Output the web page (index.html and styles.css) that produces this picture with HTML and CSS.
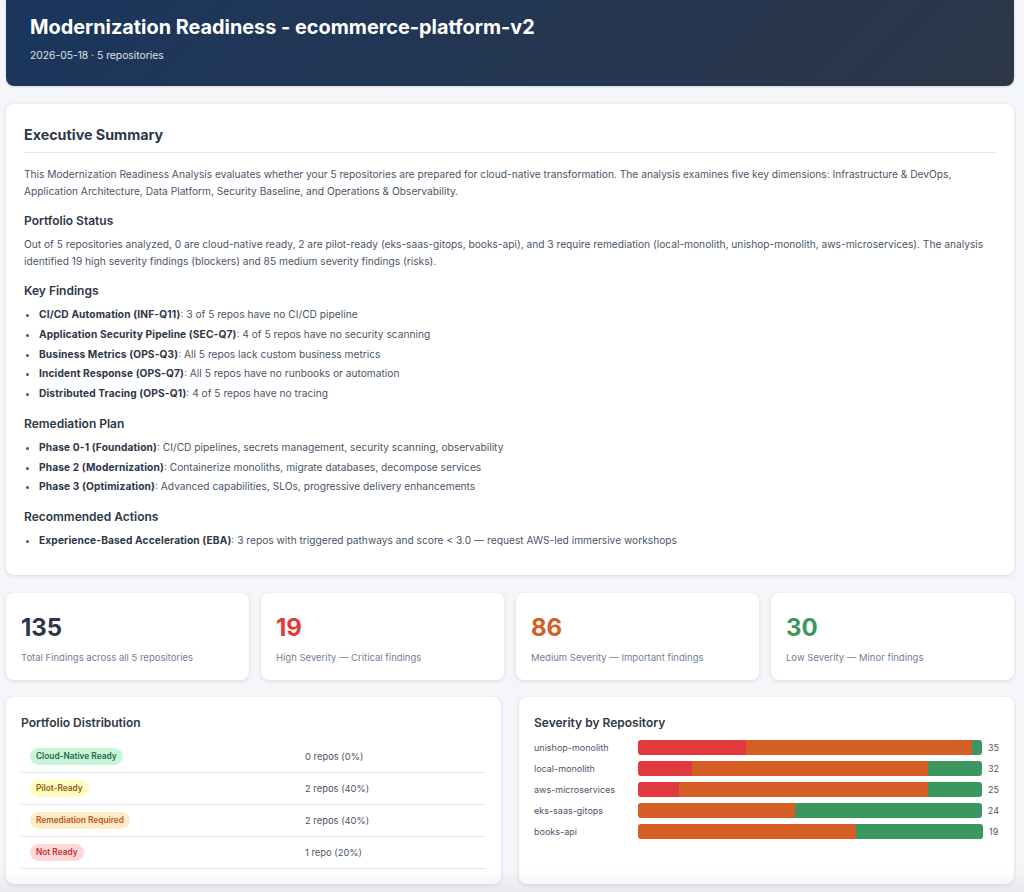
FILE: index.html
```html
<!DOCTYPE html>
<html lang="en">
<head>
<meta charset="utf-8">
<title>Modernization Readiness</title>
<link rel="stylesheet" href="styles.css">
</head>
<body>
<main class="page">
  <header class="hero">
    <h1>Modernization Readiness - ecommerce-platform-v2</h1>
    <p>2026-05-18 · 5 repositories</p>
  </header>
  <section class="card summary">
    <h2>Executive Summary</h2>
    <p>This Modernization Readiness Analysis evaluates whether your 5 repositories are prepared for cloud-native transformation. The analysis examines five key dimensions: Infrastructure &amp; DevOps, Application Architecture, Data Platform, Security Baseline, and Operations &amp; Observability.</p>
    <h3>Portfolio Status</h3>
    <p>Out of 5 repositories analyzed, 0 are cloud-native ready, 2 are pilot-ready (eks-saas-gitops, books-api), and 3 require remediation (local-monolith, unishop-monolith, aws-microservices). The analysis identified 19 high severity findings (blockers) and 85 medium severity findings (risks).</p>
    <h3>Key Findings</h3>
    <ul>
      <li><strong>CI/CD Automation (INF-Q11)</strong>: 3 of 5 repos have no CI/CD pipeline</li>
      <li><strong>Application Security Pipeline (SEC-Q7)</strong>: 4 of 5 repos have no security scanning</li>
      <li><strong>Business Metrics (OPS-Q3)</strong>: All 5 repos lack custom business metrics</li>
      <li><strong>Incident Response (OPS-Q7)</strong>: All 5 repos have no runbooks or automation</li>
      <li><strong>Distributed Tracing (OPS-Q1)</strong>: 4 of 5 repos have no tracing</li>
    </ul>
    <h3>Remediation Plan</h3>
    <ul>
      <li><strong>Phase 0-1 (Foundation)</strong>: CI/CD pipelines, secrets management, security scanning, observability</li>
      <li><strong>Phase 2 (Modernization)</strong>: Containerize monoliths, migrate databases, decompose services</li>
      <li><strong>Phase 3 (Optimization)</strong>: Advanced capabilities, SLOs, progressive delivery enhancements</li>
    </ul>
    <h3>Recommended Actions</h3>
    <ul>
      <li><strong>Experience-Based Acceleration (EBA)</strong>: 3 repos with triggered pathways and score &lt; 3.0 — request AWS-led immersive workshops</li>
    </ul>
  </section>
  <section class="kpis">
    <div class="card kpi"><div class="num navy">135</div><div class="lbl">Total Findings across all 5 repositories</div></div>
    <div class="card kpi"><div class="num red">19</div><div class="lbl">High Severity — Critical findings</div></div>
    <div class="card kpi"><div class="num orange">86</div><div class="lbl">Medium Severity — Important findings</div></div>
    <div class="card kpi"><div class="num green">30</div><div class="lbl">Low Severity — Minor findings</div></div>
  </section>
  <section class="split">
    <div class="card panel">
      <h4>Portfolio Distribution</h4>
      <table>
        <tr><td class="c1"><span class="pill p-green">Cloud-Native Ready</span></td><td>0 repos (0%)</td></tr>
        <tr><td class="c1"><span class="pill p-yellow">Pilot-Ready</span></td><td>2 repos (40%)</td></tr>
        <tr><td class="c1"><span class="pill p-orange">Remediation Required</span></td><td>2 repos (40%)</td></tr>
        <tr><td class="c1"><span class="pill p-red">Not Ready</span></td><td>1 repo (20%)</td></tr>
      </table>
    </div>
    <div class="card panel">
      <h4>Severity by Repository</h4>
      <div class="bars">
        <div class="row"><span class="name">unishop-monolith</span><div class="bar"><i class="r" style="width:31.4%"></i><i class="o" style="width:65.8%"></i><i class="g" style="width:2.8%"></i></div><span class="val">35</span></div>
        <div class="row"><span class="name">local-monolith</span><div class="bar"><i class="r" style="width:15.6%"></i><i class="o" style="width:68.8%"></i><i class="g" style="width:15.6%"></i></div><span class="val">32</span></div>
        <div class="row"><span class="name">aws-microservices</span><div class="bar"><i class="r" style="width:12%"></i><i class="o" style="width:72.2%"></i><i class="g" style="width:15.8%"></i></div><span class="val">25</span></div>
        <div class="row"><span class="name">eks-saas-gitops</span><div class="bar"><i class="o" style="width:45.8%"></i><i class="g" style="width:54.2%"></i></div><span class="val">24</span></div>
        <div class="row"><span class="name">books-api</span><div class="bar"><i class="o" style="width:63.2%"></i><i class="g" style="width:36.8%"></i></div><span class="val">19</span></div>
      </div>
    </div>
  </section>
</main>
</body>
</html>
```

FILE: styles.css
```css
* { box-sizing: border-box; }
html, body { margin: 0; padding: 0; }
body {
  position: relative;
  height: 892px;
  overflow: hidden;
  background: #f4f6fa;
  color: #2d3748;
  font-family: Inter, "Liberation Sans", sans-serif;
  font-size: 10px;
}
body::after {
  content: "";
  position: absolute;
  left: 0;
  right: 0;
  bottom: 0;
  height: 24px;
  pointer-events: none;
  background: linear-gradient(to bottom, rgba(0,0,0,0), rgba(0,0,0,.05));
}
.page { padding: 0 10px 0 6px; }
.hero {
  height: 86px;
  padding: 15px 24px 0;
  color: #fff;
  background: linear-gradient(135deg, #1a365d, #2d3748);
  border-radius: 0 0 8px 8px;
  box-shadow: 0 1px 3px rgba(0,0,0,.12);
}
.hero h1 { margin: 0; font-size: 19.85px; line-height: 24px; font-weight: 700; }
.hero p { margin: 9px 0 0; font-size: 10.3px; line-height: 14px; opacity: .85; }
.card {
  background: #fff;
  border-radius: 8px;
  box-shadow: 0 1px 4px rgba(0,0,0,.12);
}
.summary { margin-top: 18px; height: 471px; padding: 22px 18px 0; color: #4a5568; font-size: 10.2px; line-height: 17px; }
.summary h2 { margin: 0 0 13px; padding-bottom: 8px; box-sizing: content-box; height: 18px; font-size: 14.3px; line-height: 18px; font-weight: 700; color: #2d3748; border-bottom: 1px solid #e2e8f0; }
.summary p { margin: 0; }
.summary h3 { margin: 13px 0 7px; font-size: 12px; line-height: 14px; font-weight: 600; color: #2d3748; }
.summary p + h3 { margin-top: 14px; }
.summary h3 + p { margin-top: 8px; }
.summary ul { margin: 0; padding: 0 0 0 15px; }
.summary li { height: 19.75px; line-height: 19.75px; }
.summary strong { font-weight: 700; letter-spacing: .12px; color: #2d3748; }
.kpis { margin-top: 18px; display: grid; grid-template-columns: repeat(4, 1fr); gap: 12px; }
.kpi { height: 87px; padding: 21px 15px 0; }
.num { font-size: 24px; line-height: 28px; font-weight: 700; }
.lbl { margin-top: 10px; font-size: 9.5px; line-height: 12px; color: #718096; }
.navy { color: #2d3748; } .red { color: #e03a3c; } .orange { color: #d45e24; } .green { color: #3c9660; }
.split { margin-top: 17px; display: grid; grid-template-columns: 1fr 1fr; gap: 18px; }
.panel { height: 187px; padding: 18px 15px 0; }
.panel h4 { margin: 0; font-size: 12px; line-height: 15px; font-weight: 600; color: #2d3748; }
table { margin-top: 10px; width: 100%; border-collapse: collapse; font-size: 9.4px; color: #4a5568; }
td { height: 32px; padding: 1px 9px 0; border-bottom: 1px solid #e2e8f0; vertical-align: middle; }
.c1 { width: 275px; }
.pill { display: inline-block; vertical-align: middle; height: 17px; line-height: 17px; padding: 0 6px; border-radius: 9px; font-size: 8.3px; font-weight: 600; }
.p-green { background: #c6f6d5; color: #276749; }
.p-yellow { background: #fefcbf; color: #975a16; }
.p-orange { background: #feebc8; color: #c05621; }
.p-red { background: #fed7d7; color: #c53030; }
.bars { margin-top: 7px; }
.row { display: flex; align-items: center; height: 20.9px; }
.name { width: 104px; flex: none; font-size: 9px; color: #4a5568; }
.bar { flex: 1; height: 15px; display: flex; border-radius: 3px; overflow: hidden; }
.bar i { display: block; height: 100%; }
.r { background: #e03a3c; } .o { background: #d45e24; } .g { background: #3c9660; }
.val { margin-left: 6px; flex: none; min-width: 10px; font-size: 9px; color: #4a5568; }
```
